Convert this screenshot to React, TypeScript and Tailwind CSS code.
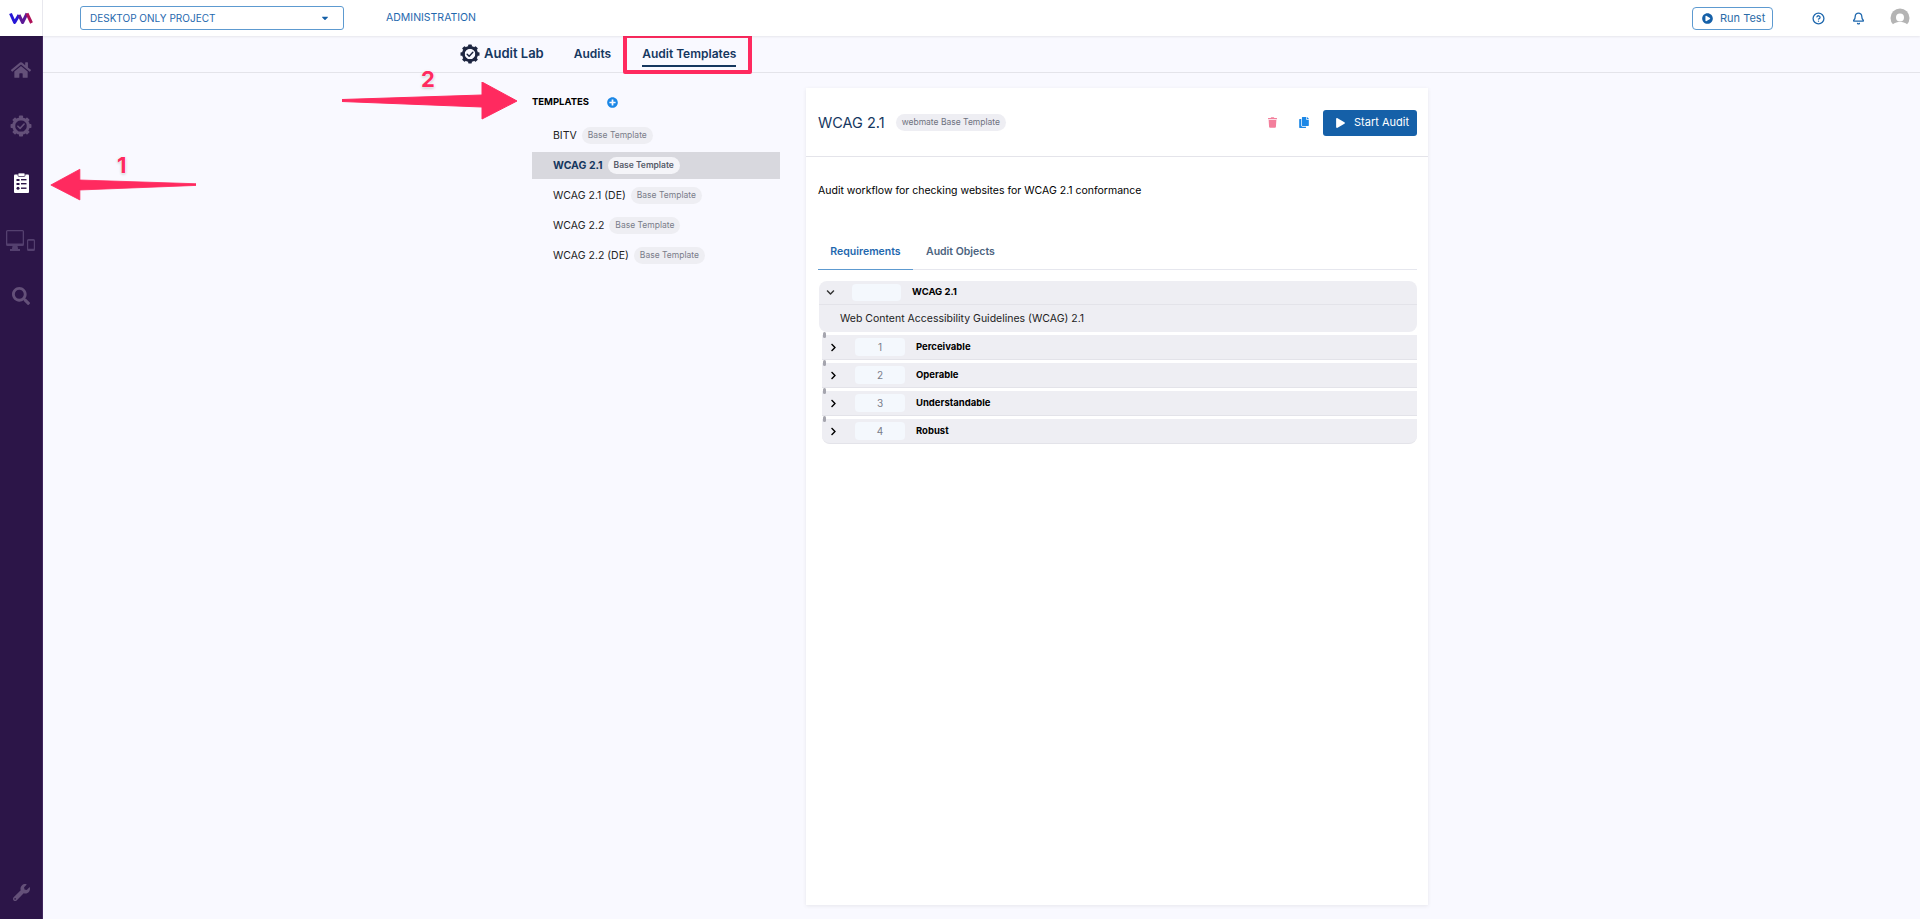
import React from 'react';
import { FaHome, FaSearch, FaWrench, FaPlusCircle, FaTrash, FaPlay, FaPlayCircle, FaCopy, FaChevronRight, FaChevronDown, FaCaretDown } from 'react-icons/fa';
import { Bell, CircleHelp } from 'lucide-react';

function GearCheck({ className }: { className?: string }) {
  const teeth = [0, 45, 90, 135, 180, 225, 270, 315];
  return (
    <svg viewBox="0 0 24 24" className={className} fill="none">
      {teeth.map((a) => (
        <rect key={a} x="9.8" y="0.6" width="4.4" height="5" rx="0.8" fill="currentColor" transform={`rotate(${a} 12 12)`} />
      ))}
      <circle cx="12" cy="12" r="8" stroke="currentColor" strokeWidth="3.2" />
      <path d="M8.6 12.2l2.4 2.4 4.4-4.8" stroke="currentColor" strokeWidth="1.7" strokeLinecap="round" strokeLinejoin="round" />
    </svg>
  );
}

function Logo() {
  return (
    <svg viewBox="0 0 24 12" className="w-[24px] h-[12px]" fill="none">
      <path d="M1.5 1.5L5.6 10.5L10 3" stroke="#2616d6" strokeWidth="3" strokeLinejoin="round" />
      <path d="M10 3L13.6 10.5L18 1.5" stroke="#5b1896" strokeWidth="3" strokeLinejoin="round" />
      <path d="M18 1.5L22.5 11" stroke="#ad1058" strokeWidth="3" />
    </svg>
  );
}

function Clipboard({ className }: { className?: string }) {
  return (
    <svg viewBox="0 0 15 20" className={className}>
      <rect x="0" y="1.5" width="15" height="18.5" rx="1" fill="#fff" />
      <rect x="4" y="0" width="7" height="3.5" rx="1" fill="#fff" stroke="#2c1548" strokeWidth="0.7" />
      <g fill="#2c1548">
        <rect x="2.5" y="6" width="3" height="2" />
        <rect x="7" y="6" width="5.5" height="1.4" />
        <rect x="2.5" y="10" width="3" height="2" />
        <rect x="7" y="10" width="5.5" height="1.4" />
        <circle cx="4" cy="15.2" r="1.5" />
        <rect x="7" y="14.5" width="5.5" height="1.4" />
      </g>
    </svg>
  );
}

function Devices({ className }: { className?: string }) {
  return (
    <svg viewBox="0 0 29 21" className={className} fill="currentColor">
      <path fillRule="evenodd" d="M1.5 0h15a1.5 1.5 0 0 1 1.5 1.5v13a1.5 1.5 0 0 1-1.5 1.5H11.5l.6 3H14v2H4v-2h1.9l.6-3H1.5A1.5 1.5 0 0 1 0 14.5v-13A1.5 1.5 0 0 1 1.5 0zM1.3 1.3v12.2h15.4V1.3H1.3z" />
      <path fillRule="evenodd" d="M22.5 9h5a1.5 1.5 0 0 1 1.5 1.5v9a1.5 1.5 0 0 1-1.5 1.5h-5a1.5 1.5 0 0 1-1.5-1.5v-9A1.5 1.5 0 0 1 22.5 9zm-.3 1.8v8h5.600v-8h-5.600z" />
    </svg>
  );
}

function Avatar() {
  return (
    <svg viewBox="0 0 20 20" className="w-[20px] h-[20px]">
      <circle cx="10" cy="10" r="9.5" fill="#b4b4b4" />
      <circle cx="10" cy="9.5" r="4" fill="#fff" />
      <path d="M1 20c1-4.5 5-6 9-6s8 1.5 9 6z" fill="#fff" />
    </svg>
  );
}

// annotation arrows painted over the screenshot
function Arrow({ className, flip }: { className: string; flip?: boolean }) {
  return (
    <svg viewBox="0 0 176 38" className={className} style={flip ? { transform: 'scaleX(-1)' } : undefined}>
      <path d="M0 17.5 L140 13 L140 0 L175 19 L140 37 L140 25 L0 19.5 Z" fill="#ff2a5f" stroke="#ff2a5f" strokeWidth="1" strokeLinejoin="round" />
    </svg>
  );
}

function Badge({ children, active }: { children: React.ReactNode; active?: boolean }) {
  return (
    <span className={`ml-[5px] h-[17px] px-[6px] rounded-full text-[8.5px] flex items-center ${active ? 'bg-[#f4f4f8] text-[#555a68] font-semibold' : 'bg-[#eeeef3] text-[#7a7d8a]'}`}>
      {children}
    </span>
  );
}

const templates = [
  { name: 'BITV' },
  { name: 'WCAG 2.1', active: true },
  { name: 'WCAG 2.1 (DE)' },
  { name: 'WCAG 2.2' },
  { name: 'WCAG 2.2 (DE)' },
];

const requirements = [
  { id: '1', name: 'Perceivable' },
  { id: '2', name: 'Operable' },
  { id: '3', name: 'Understandable' },
  { id: '4', name: 'Robust' },
];

export default function App() {
  return (
    <div className="relative flex flex-col h-screen overflow-hidden bg-[#f9f9ff] text-black font-['Inter',sans-serif]">
      {/* Top bar */}
      <header className="flex items-center h-[36px] bg-white shadow-[0_1px_2px_rgba(0,0,0,0.08)] z-10">
        <div className="w-[43px] h-full flex items-center justify-center border-r border-[#e8e8ee]">
          <Logo />
        </div>
        <div className="ml-[37px] w-[264px] h-[24px] border border-[#5d9ad0] rounded-[3px] flex items-center justify-between pl-[9px] pr-[13px] text-[10px] text-[#1f68ae]">
          DESKTOP ONLY PROJECT
          <FaCaretDown className="w-[10px] h-[10px] text-[#1560a8]" />
        </div>
        <span className="ml-[42px] text-[10.5px] text-[#1f68ae]">ADMINISTRATION</span>
        <div className="ml-auto flex items-center">
          <div className="w-[81px] h-[23px] border border-[#5d9ad0] rounded-[4px] flex items-center pl-[9px] text-[11px] text-[#2b6ca8]">
            <FaPlayCircle className="w-[11px] h-[11px] text-[#1560a8] mr-[7px]" />
            Run Test
          </div>
          <CircleHelp className="ml-[39px] w-[13px] h-[13px] text-[#1f68ae]" strokeWidth={2.4} />
          <Bell className="ml-[27px] w-[13px] h-[13px] text-[#1f68ae]" strokeWidth={2.4} />
          <div className="ml-[25px] mr-[10px]">
            <Avatar />
          </div>
        </div>
      </header>

      <div className="flex flex-1 min-h-0">
        {/* Sidebar */}
        <aside className="w-[43px] bg-[#2c1548] border-r border-[#41275f] flex flex-col items-center text-[#645079]">
          <FaHome className="mt-[24px] w-[20px] h-[20px]" />
          <GearCheck className="mt-[35px] w-[22px] h-[22px]" />
          <Clipboard className="mt-[36px] w-[15px] h-[20px]" />
          <Devices className="mt-[37px] ml-[-2px] w-[29px] h-[21px] text-[#54406f]" />
          <FaSearch className="mt-[36px] w-[18px] h-[18px]" />
          <FaWrench className="mt-auto mb-[18px] w-[17px] h-[17px]" />
        </aside>

        <main className="flex-1 flex flex-col min-w-0">
          {/* Sub navigation */}
          <nav className="h-[37px] border-b border-[#e4e4ea] flex items-center text-[#15375f]">
            <GearCheck className="ml-[417px] w-[20px] h-[20px] text-[#1d2540]" />
            <span className="ml-[4px] text-[13px] font-semibold">Audit Lab</span>
            <span className="ml-[30px] text-[12px] font-semibold">Audits</span>
            <span className="relative ml-[31px] text-[12px] font-semibold">
              Audit Templates
              <span className="absolute left-0 right-0 bottom-[-4px] h-[2px] bg-[#15375f]" />
            </span>
          </nav>

          <div className="flex flex-1 min-h-0">
            {/* Template list */}
            <section className="ml-[489px] w-[248px] pt-[21px]">
              <div className="flex items-center h-[16px] text-[9.5px] font-bold">
                TEMPLATES
                <FaPlusCircle className="ml-[18px] w-[11px] h-[11px] text-[#1b87e6]" />
              </div>
              <ul className="mt-[12px]">
                {templates.map((t) => (
                  <li
                    key={t.name}
                    className={`h-[27px] mb-[3px] pl-[21px] flex items-center text-[10.5px] ${t.active ? 'bg-[#d8d8de] font-bold text-[#15375f]' : 'text-[#222]'}`}
                  >
                    {t.name}
                    <Badge active={t.active}>Base Template</Badge>
                  </li>
                ))}
              </ul>
            </section>

            {/* Detail card */}
            <section className="ml-[26px] mt-[15px] mb-[14px] w-[622px] bg-white shadow-[0_1px_4px_rgba(0,0,0,0.08)] flex flex-col">
              <div className="h-[69px] pt-[1px] border-b border-[#e4e4ea] flex items-center pl-[12px] pr-[11px]">
                <span className="text-[14.5px] text-[#15375f]">WCAG 2.1</span>
                <span className="ml-[11px] h-[17px] px-[6px] rounded-full bg-[#eeeef3] text-[8.5px] text-[#6f7280] flex items-center">
                  webmate Base Template
                </span>
                <FaTrash className="ml-auto w-[9px] h-[11px] text-[#f37f9c]" />
                <FaCopy className="ml-[22px] w-[10px] h-[11px] text-[#1b87e6]" />
                <button className="ml-[14px] w-[94px] h-[26px] bg-[#1560a8] rounded-[3px] text-white text-[11px] flex items-center pl-[13px]">
                  <FaPlay className="w-[9px] h-[10px] mr-[9px]" />
                  Start Audit
                </button>
              </div>

              <div className="pl-[12px] pr-[11px] flex flex-col">
                <p className="mt-[26px] text-[10.5px] leading-[16px]">Audit workflow for checking websites for WCAG 2.1 conformance</p>

                {/* Tabs */}
                <div className="mt-[36px] flex h-[35px] border-b border-[#e6e7ee] text-[10.5px] font-semibold">
                  <div className="w-[95px] -mb-px border-b border-[#5d9ad0] flex items-center justify-center text-[#1f68ae]">Requirements</div>
                  <div className="ml-[13px] flex items-center text-[#4d6480]">Audit Objects</div>
                </div>

                {/* Requirement tree */}
                <div className="mt-[11px] ml-[1px]">
                  <div className="bg-[#eeeef3] rounded-[8px]">
                    <div className="h-[24px] flex items-center border-b border-[#e3e3e9]">
                      <FaChevronDown className="ml-[7px] w-[9px] h-[9px] text-[#333]" />
                      <span className="ml-[17px] w-[49px] h-[17px] rounded-[4px] bg-[#f4f8fd]" />
                      <span className="ml-[11px] text-[9.5px] font-bold">WCAG 2.1</span>
                    </div>
                    <div className="h-[27px] pl-[21px] flex items-center text-[10.5px] text-[#222]">
                      Web Content Accessibility Guidelines (WCAG) 2.1
                    </div>
                  </div>
                  <div className="ml-[3px] bg-white">
                    {requirements.map((r) => (
                      <div key={r.id} className="relative pt-[3px]">
                        <span className="absolute left-[1px] top-0 w-[3px] h-[6px] rounded-full bg-[#a5a5ae]" />
                        <div className={`h-[25px] bg-[#eeeef3] border-b border-[#e3e3e9] flex items-center ${r.id === '4' ? 'rounded-b-[8px]' : ''}`}>
                          <FaChevronRight className="ml-[7px] w-[9px] h-[9px] text-black" />
                          <span className="ml-[17px] w-[50px] h-[18px] rounded-[4px] bg-[#f4f8fd] text-[10px] text-[#7a7d8a] flex items-center justify-center">{r.id}</span>
                          <span className="ml-[11px] text-[9.5px] font-bold">{r.name}</span>
                        </div>
                      </div>
                    ))}
                  </div>
                </div>
              </div>
            </section>
          </div>
        </main>
      </div>

      {/* Annotations painted over the page */}
      <div className="absolute left-[623px] top-[34px] w-[129px] h-[40px] border-[4px] border-[#ff2a5f] rounded-[2px]" />
      <Arrow className="absolute left-[342px] top-[82px] w-[176px] h-[38px]" />
      <Arrow flip className="absolute left-[50px] top-[167px] w-[146px] h-[36px]" />
      <span className="absolute left-[421px] top-[63px] text-[22px] font-bold text-[#ff2a5f] [text-shadow:0_0_2px_white,0_0_2px_white,0_1px_3px_rgba(0,0,0,0.3)]">2</span>
      <span className="absolute left-[117px] top-[149px] text-[22px] font-bold text-[#ff2a5f] [text-shadow:0_0_2px_white,0_0_2px_white,0_1px_3px_rgba(0,0,0,0.3)]">1</span>
    </div>
  );
}
